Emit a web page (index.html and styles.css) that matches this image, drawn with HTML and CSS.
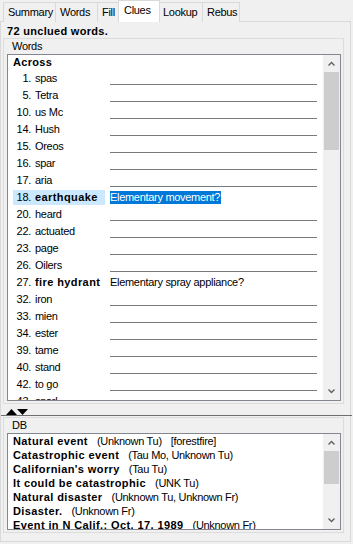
FILE: index.html
```html
<!doctype html>
<html lang="en">
<head>
	<meta charset="UTF-8" />
	<title>Clues</title>
	<link rel="stylesheet" href="styles.css">
</head>
<body>
	<!--tabs-->
	<div class="tabs">
		<div class="tab t-sum">Summary</div>
		<div class="tab t-words">Words</div>
		<div class="tab t-fill">Fill</div>
		<div class="tab t-clues active">Clues</div>
		<div class="tab t-look">Lookup</div>
		<div class="tab t-rebus">Rebus</div>
	</div>

	<div class="page">
		<div class="status">72 unclued words.</div>

		<!--words group-->
		<div class="group words">
			<div class="cap">Words</div>
			<div class="list">
				<div class="rows">
					<div class="head">Across</div>
					<div class="row"><span class="lbl"><span class="num">1.</span>spas</span><span class="field"></span></div>
					<div class="row"><span class="lbl"><span class="num">5.</span>Tetra</span><span class="field"></span></div>
					<div class="row"><span class="lbl"><span class="num">10.</span>us Mc</span><span class="field"></span></div>
					<div class="row"><span class="lbl"><span class="num">14.</span>Hush</span><span class="field"></span></div>
					<div class="row"><span class="lbl"><span class="num">15.</span>Oreos</span><span class="field"></span></div>
					<div class="row"><span class="lbl"><span class="num">16.</span>spar</span><span class="field"></span></div>
					<div class="row"><span class="lbl"><span class="num">17.</span>aria</span><span class="field"></span></div>
					<div class="row sel"><span class="lbl"><span class="num">18.</span><b>earthquake</b></span><span class="field done"><span class="mark">Elementary movement?</span></span></div>
					<div class="row"><span class="lbl"><span class="num">20.</span>heard</span><span class="field"></span></div>
					<div class="row"><span class="lbl"><span class="num">22.</span>actuated</span><span class="field"></span></div>
					<div class="row"><span class="lbl"><span class="num">23.</span>page</span><span class="field"></span></div>
					<div class="row"><span class="lbl"><span class="num">26.</span>Oilers</span><span class="field"></span></div>
					<div class="row"><span class="lbl"><span class="num">27.</span><b>fire hydrant</b></span><span class="field done">Elementary spray appliance?</span></div>
					<div class="row"><span class="lbl"><span class="num">32.</span>iron</span><span class="field"></span></div>
					<div class="row"><span class="lbl"><span class="num">33.</span>mien</span><span class="field"></span></div>
					<div class="row"><span class="lbl"><span class="num">34.</span>ester</span><span class="field"></span></div>
					<div class="row"><span class="lbl"><span class="num">39.</span>tame</span><span class="field"></span></div>
					<div class="row"><span class="lbl"><span class="num">40.</span>stand</span><span class="field"></span></div>
					<div class="row"><span class="lbl"><span class="num">42.</span>to go</span><span class="field"></span></div>
					<div class="row"><span class="lbl"><span class="num">43.</span>snarl</span><span class="field"></span></div>
				</div>
				<div class="vscroll">
					<div class="arr"><svg width="7" height="5" viewBox="0 0 7 5"><polyline points="0.5,4.5 3.5,1.5 6.5,4.5" fill="none" stroke="#606060" stroke-width="1.4"/></svg></div>
					<div class="track"><div class="thumb big"></div></div>
					<div class="arr"><svg width="7" height="5" viewBox="0 0 7 5"><polyline points="0.5,0.5 3.5,3.5 6.5,0.5" fill="none" stroke="#606060" stroke-width="1.4"/></svg></div>
				</div>
			</div>
		</div>

		<!--splitter-->
		<div class="split">
			<svg width="24" height="6" viewBox="0 0 24 6"><polygon points="0,6 5.5,0 11,6" fill="#000"/><polygon points="11,0 22,0 16.5,6" fill="#000"/></svg>
		</div>

		<!--db group-->
		<div class="group db">
			<div class="cap">DB</div>
			<div class="list">
				<div class="rows">
					<div class="dbrow"><b>Natural event</b><span class="src">(Unknown Tu)</span><span class="src">[forestfire]</span></div>
					<div class="dbrow"><b>Catastrophic event</b><span class="src">(Tau Mo, Unknown Tu)</span></div>
					<div class="dbrow"><b>Californian's worry</b><span class="src">(Tau Tu)</span></div>
					<div class="dbrow"><b>It could be catastrophic</b><span class="src">(UNK Tu)</span></div>
					<div class="dbrow"><b>Natural disaster</b><span class="src">(Unknown Tu, Unknown Fr)</span></div>
					<div class="dbrow"><b>Disaster.</b><span class="src">(Unknown Fr)</span></div>
					<div class="dbrow"><b>Event in N Calif.: Oct. 17, 1989</b><span class="src">(Unknown Fr)</span></div>
				</div>
				<div class="vscroll">
					<div class="arr"><svg width="7" height="5" viewBox="0 0 7 5"><polyline points="0.5,4.5 3.5,1.5 6.5,4.5" fill="none" stroke="#606060" stroke-width="1.4"/></svg></div>
					<div class="track"><div class="thumb small"></div></div>
					<div class="arr"><svg width="7" height="5" viewBox="0 0 7 5"><polyline points="0.5,0.5 3.5,3.5 6.5,0.5" fill="none" stroke="#606060" stroke-width="1.4"/></svg></div>
				</div>
			</div>
		</div>
	</div>
</body>
</html>
```

FILE: styles.css
```css
*{
	padding: 0;
	margin: 0;
	box-sizing: border-box;
}
body{
	background: #f0f0f0;
	font-family: "Liberation Sans", Arial, sans-serif;
	font-size: 11px;
	letter-spacing: -0.3px;
	color: #000;
	width: 353px;
	height: 544px;
	overflow: hidden;
}
b{
	letter-spacing: 0.4px;
}

/*tabs*/
.tabs{
	display: flex;
	align-items: flex-end;
	height: 22px;
	padding-left: 3px;
	position: relative;
	z-index: 1;
}
.tab{
	height: 20px;
	line-height: 19px;
	padding-left: 4px;
	border: 1px solid #d9d9d9;
	border-bottom: none;
	margin-right: -1px;
	background: #f0f0f0;
	white-space: nowrap;
}
.tab.active{
	height: 22px;
	line-height: 19px;
	background: #fff;
	padding-left: 5px;
	margin: 0 -2px 0 -2px;
	position: relative;
	z-index: 2;
}
.t-sum{ width: 53px; }
.t-words{ width: 43px; }
.t-fill{ width: 24px; }
.t-clues{ width: 42px; }
.t-look{ width: 45px; }
.t-rebus{ width: 38px; }

/*tab page*/
.page{
	width: 351px;
	height: 521px;
	margin-top: -1px;
	border: 1px solid #d9d9d9;
	padding: 2px 0 0 2px;
}
.status{
	font-weight: bold;
	letter-spacing: 0.3px;
	line-height: 14px;
	padding-left: 4px;
	height: 14px;
}

/*group boxes*/
.group{
	width: 341px;
	border: 1px solid #dcdcdc;
	padding: 0 2px 2px 3px;
}
.cap{
	line-height: 14px;
	height: 15px;
	padding-left: 5px;
}
.list{
	display: flex;
	background: #fff;
	border: 1px solid #828790;
	overflow: hidden;
}
.words .list{
	height: 347px;
}
.db .list{
	height: 97px;
}
.rows{
	flex: 1;
	overflow: hidden;
	padding-left: 5px;
}

/*word rows*/
.head{
	font-weight: bold;
	letter-spacing: 0.3px;
	height: 15px;
	line-height: 15px;
}
.row{
	display: flex;
	height: 17px;
	line-height: 17px;
	white-space: nowrap;
}
.lbl{
	width: 92px;
	height: 15px;
	line-height: 15px;
	margin-top: 1px;
}
.num{
	display: inline-block;
	width: 18px;
	text-align: right;
	margin-right: 4px;
}
.field{
	width: 207px;
	height: 15px;
	line-height: 15px;
	margin-left: 5px;
	border-bottom: 1px solid #7a7a7a;
}
.field.done{
	border-bottom-color: transparent;
	margin-top: 1px;
}
.sel .lbl{
	background: #cce8ff;
}
.mark{
	background: #0078d7;
	color: #fff;
	display: inline-block;
	height: 13px;
	line-height: 13px;
	padding-right: 1px;
}

/*db rows*/
.dbrow{
	height: 14px;
	line-height: 14px;
	white-space: nowrap;
}
.src{
	margin-left: 9px;
}

/*scrollbar*/
.vscroll{
	width: 17px;
	display: flex;
	flex-direction: column;
	background: #f0f0f0;
}
.arr{
	height: 17px;
	display: flex;
	align-items: center;
	justify-content: center;
}
.track{
	flex: 1;
	padding: 0 1px;
}
.thumb{
	background: #cdcdcd;
}
.thumb.big{
	height: 78px;
}
.thumb.small{
	height: 33px;
}

/*splitter*/
.split{
	height: 12px;
	margin-left: -2px;
	margin-right: -2px;
	padding: 5px 0 0 5px;
	border-bottom: 1px solid #6e6e6e;
	margin-bottom: 1px;
}
.split svg{
	display: block;
}
```
